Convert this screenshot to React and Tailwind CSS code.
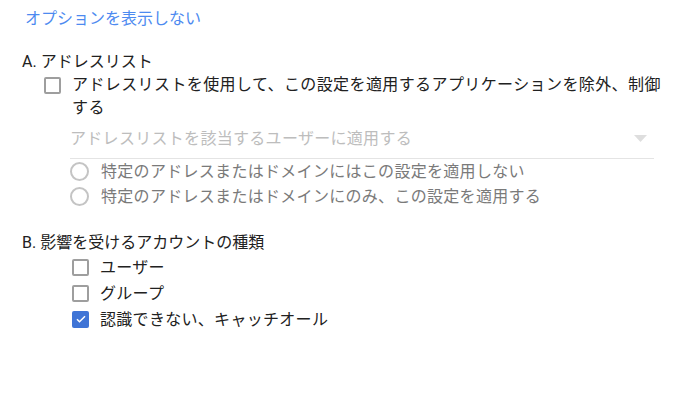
import React, { useState } from 'react';

const font = { fontFamily: 'Roboto, "Noto Sans CJK JP", sans-serif' };

const Checkbox = ({ checked, onChange }) => (
  <button
    type="button"
    onClick={onChange}
    className={
      checked
        ? 'flex h-[17px] w-[17px] shrink-0 items-center justify-center rounded-[2px] bg-[#3f74d6]'
        : 'h-[17px] w-[17px] shrink-0 rounded-[2px] border-2 border-[#9e9e9e] bg-white'
    }
  >
    {checked && (
      <svg width="12" height="12" viewBox="0 0 24 24" fill="none">
        <path d="M4 12.5l5 5L20 6.5" stroke="white" strokeWidth="3" />
      </svg>
    )}
  </button>
);

const Radio = ({ label }) => (
  <div className="flex h-[25px] items-center gap-[12px]">
    <span className="h-[19px] w-[19px] shrink-0 rounded-full border-2 border-[#c4c4c4]" />
    <span className="text-[16px] leading-[23px] tracking-[0.3px] text-[#7a7a7a]">{label}</span>
  </div>
);

const accountTypes = [
  { id: 'user', label: 'ユーザー' },
  { id: 'group', label: 'グループ' },
  { id: 'catchall', label: '認識できない、キャッチオール' },
];

export default function App() {
  const [useList, setUseList] = useState(false);
  const [types, setTypes] = useState({ user: false, group: false, catchall: true });

  return (
    <div className="min-h-[402px] bg-white px-[22px] pt-[8px] text-[#212121]" style={font}>
      <a href="#" className="ml-[3px] block text-[16px] leading-[22px] text-[#4d8af0]">
        オプションを表示しない
      </a>

      <div className="mt-[20px] text-[16px] leading-[23px]">A. アドレスリスト</div>
      <div className="ml-[22px] flex gap-[11px]">
        <div className="pt-[2px]">
          <Checkbox checked={useList} onChange={() => setUseList(!useList)} />
        </div>
        <div className="w-[590px] text-[16px] leading-[23px] tracking-[0.4px]">
          アドレスリストを使用して、この設定を適用するアプリケーションを除外、制御する
        </div>
      </div>

      <div className="ml-[48px] w-[584px]">
        <div className="box-border flex h-[40px] items-center justify-between border-b border-[#e4e4e4] pr-[7px]">
          <span className="text-[16px] leading-[23px] tracking-[0.3px] text-[#bdbdbd]">
            アドレスリストを該当するユーザーに適用する
          </span>
          <svg width="13" height="7" viewBox="0 0 13 7">
            <path d="M0 0h13L6.5 7z" fill="#dedede" />
          </svg>
        </div>
        <Radio label="特定のアドレスまたはドメインにはこの設定を適用しない" />
        <Radio label="特定のアドレスまたはドメインにのみ、この設定を適用する" />
      </div>

      <div className="mt-[22px] text-[16px] leading-[23px]">B. 影響を受けるアカウントの種類</div>
      <div className="ml-[50px]">
        {accountTypes.map((t) => (
          <div key={t.id} className="flex h-[26px] items-center gap-[11px]">
            <Checkbox
              checked={types[t.id]}
              onChange={() => setTypes({ ...types, [t.id]: !types[t.id] })}
            />
            <span className="text-[16px] leading-[23px] tracking-[0.3px]">{t.label}</span>
          </div>
        ))}
      </div>
    </div>
  );
}
